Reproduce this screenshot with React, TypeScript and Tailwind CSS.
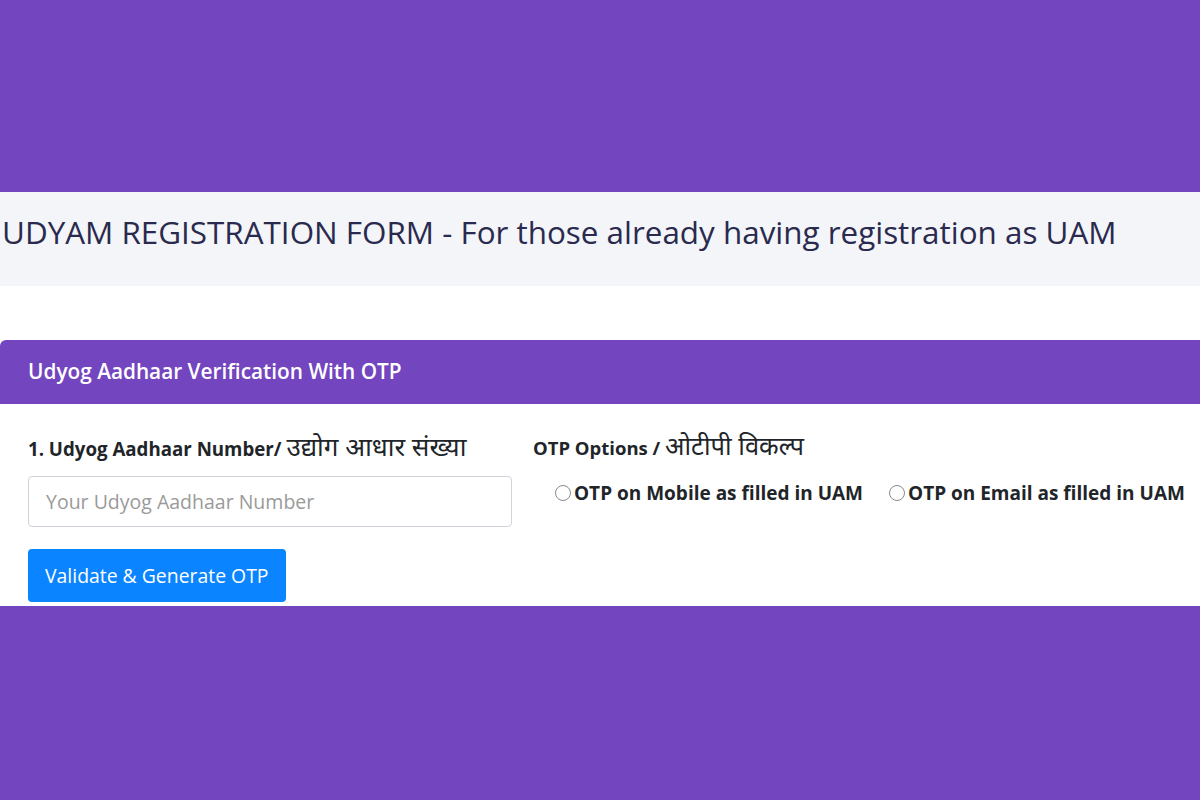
const font = { fontFamily: '"Open Sans", "Noto Sans", sans-serif' };

const App = () => {
  return (
    <div className="w-[1200px] h-[800px] bg-[#7345bf] flex flex-col" style={font}>
      <div className="h-[192px]"></div>

      {/* Title band */}
      <div className="h-[94px] bg-[#f3f5f9] flex items-center pl-[2px] pb-[14px]">
        <h1 className="text-[31.4px] text-[#2a2a4e] leading-none">
          UDYAM REGISTRATION FORM - For those already having registration as UAM
        </h1>
      </div>

      <div className="h-[54px] bg-white"></div>

      {/* Card */}
      <div className="bg-white">
        <div className="h-[64px] bg-[#7345bf] rounded-tl-[6px] flex items-center pl-[28px]">
          <h2 className="text-white text-[20.8px] font-semibold">
            Udyog Aadhaar Verification With OTP
          </h2>
        </div>

        <div className="h-[202px] flex pl-[28px] pt-[29px]">
          <div className="w-[484px]">
            <label className="flex items-baseline text-[18.7px] font-bold text-[#212529] h-[32px] leading-none">
              1. Udyog Aadhaar Number/&nbsp;<span className="font-normal text-[26px] leading-none">उद्योग आधार संख्या</span>
            </label>
            <input
              className="mt-[11px] w-[484px] h-[51px] border border-[#ced4da] rounded-[4px] px-[17px] text-[19.5px] placeholder:text-[#9a9a9a] outline-none"
              placeholder="Your Udyog Aadhaar Number"
            />
            <button className="mt-[22px] bg-[#0a84ff] text-white text-[19.4px] h-[53px] px-[17px] rounded-[4px]">
              Validate &amp; Generate OTP
            </button>
          </div>

          <div className="ml-[21px] flex-1">
            <div className="flex items-baseline text-[18.5px] font-bold text-[#212529] h-[32px] leading-none">
              OTP Options /&nbsp;<span className="font-normal text-[25.5px] leading-none">ओटीपी विकल्प</span>
            </div>
            <div className="mt-[14px] flex items-center pl-[22px] gap-[26px] text-[19px] font-bold text-[#212529]">
              <label className="flex items-center">
                <span className="w-[16px] h-[16px] rounded-full border border-[#8a8a8a] mr-[3px]"></span>
                OTP on Mobile as filled in UAM
              </label>
              <label className="flex items-center">
                <span className="w-[16px] h-[16px] rounded-full border border-[#8a8a8a] mr-[3px]"></span>
                OTP on Email as filled in UAM
              </label>
            </div>
          </div>
        </div>
      </div>
    </div>
  );
};

export default App;
